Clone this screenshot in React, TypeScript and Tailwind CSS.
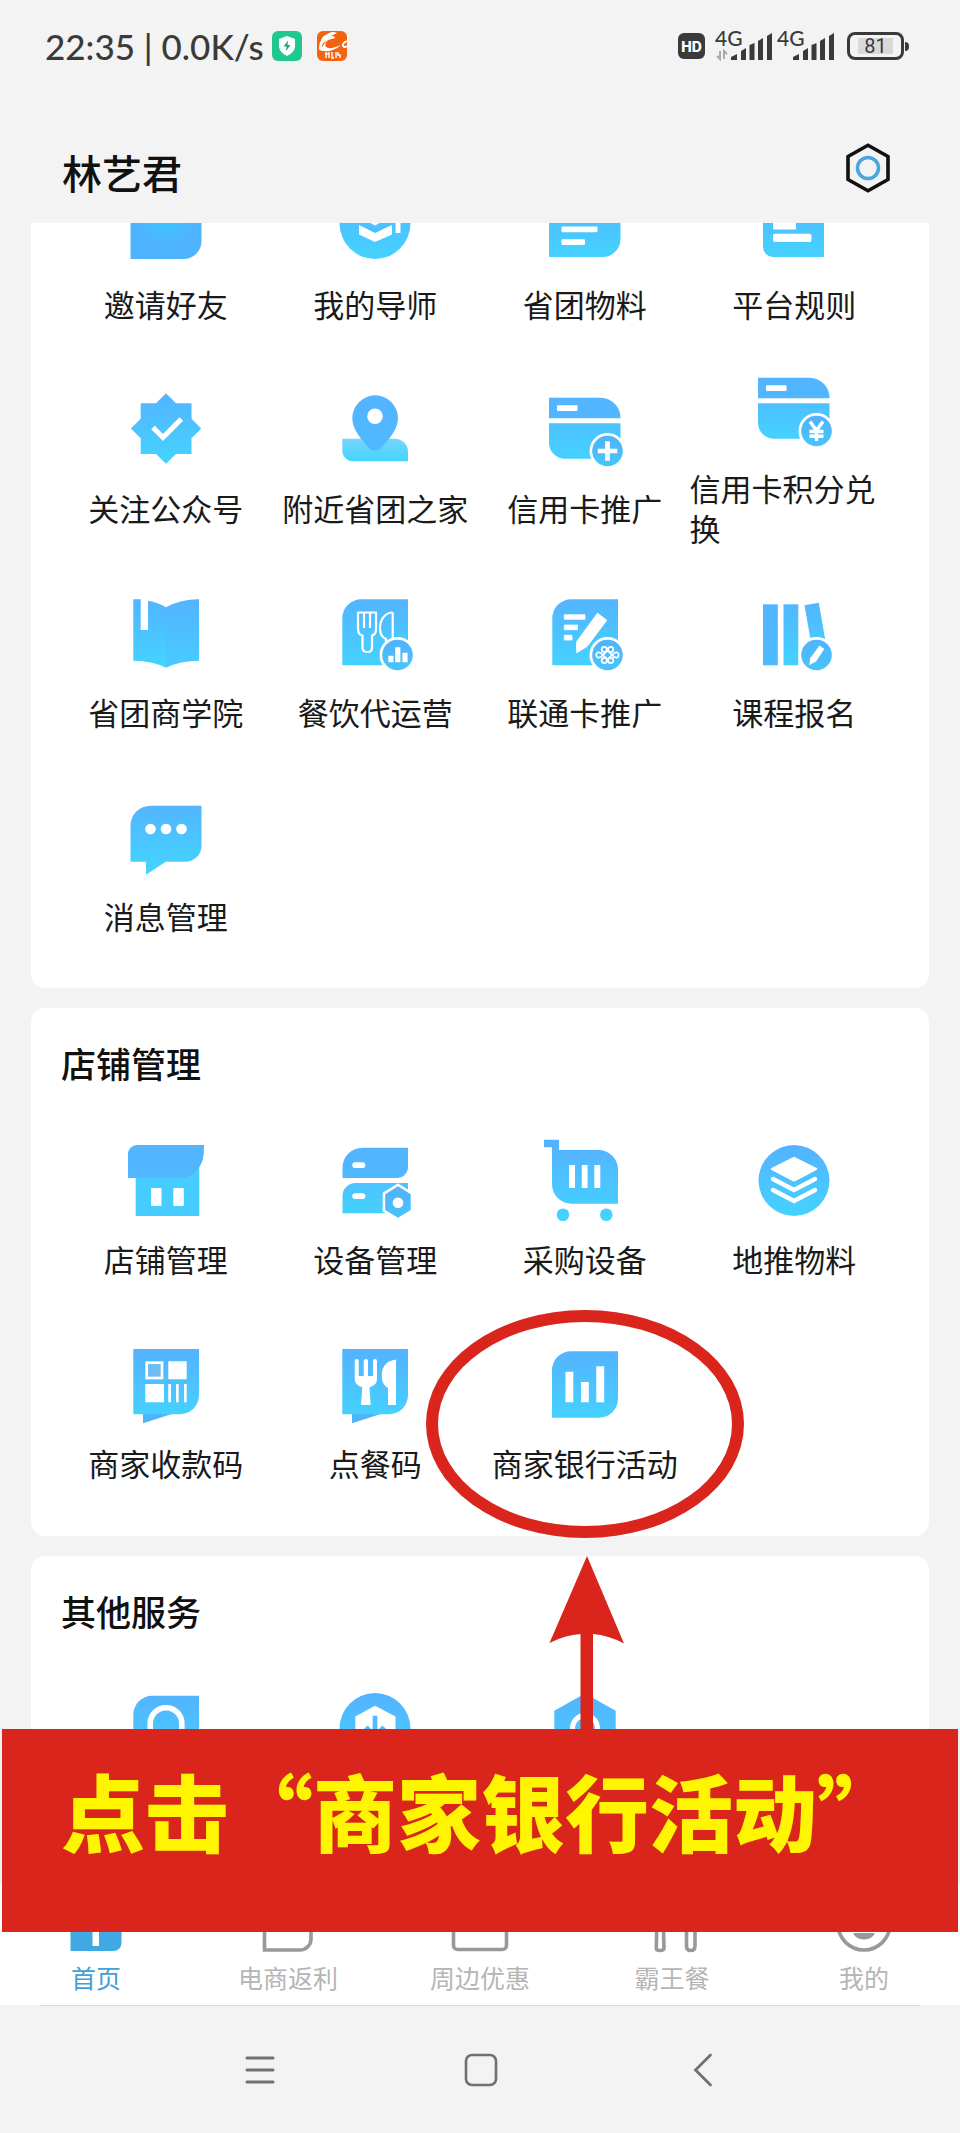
import React from 'react';

type Tile = {
  id: string;
  label?: string;
  icon: React.ReactNode;
  marked?: boolean;
};

// Gradients shared by all the tile icons (80x80 canvas)
const Gradients = () => (
  <svg className="absolute h-0 w-0" aria-hidden="true">
    <defs>
      <linearGradient id="sky" gradientUnits="userSpaceOnUse" x1="0" y1="5" x2="0" y2="75">
        <stop offset="0" stopColor="#54b3ff" />
        <stop offset="1" stopColor="#44d3ff" />
      </linearGradient>
      <linearGradient id="deep" gradientUnits="userSpaceOnUse" x1="0" y1="0" x2="0" y2="90">
        <stop offset="0" stopColor="#54b3ff" />
        <stop offset="1" stopColor="#4cbdff" />
      </linearGradient>
      <linearGradient id="badge" gradientUnits="userSpaceOnUse" x1="0" y1="44" x2="0" y2="80">
        <stop offset="0" stopColor="#52b0fb" />
        <stop offset="1" stopColor="#46c6fb" />
      </linearGradient>
      <linearGradient id="base" gradientUnits="userSpaceOnUse" x1="0" y1="48" x2="0" y2="74">
        <stop offset="0" stopColor="#7fd4fb" />
        <stop offset="1" stopColor="#41d5ff" />
      </linearGradient>
      <radialGradient id="glow" gradientUnits="userSpaceOnUse" cx="40" cy="34" r="26">
        <stop offset="0" stopColor="#38caff" />
        <stop offset="1" stopColor="#4fb4ff" />
      </radialGradient>
    </defs>
  </svg>
);

const Icon = ({ children, viewBox = '0 0 80 80' }: { children: React.ReactNode; viewBox?: string }) => (
  <svg viewBox={viewBox} className="h-20 w-20 shrink-0 overflow-visible" fill="url(#sky)" aria-hidden="true">
    {children}
  </svg>
);

// the shop and service icons sit a little lower on their canvas
const LowIcon = ({ children }: { children: React.ReactNode }) => <Icon viewBox="0 -3 80 80">{children}</Icon>;

const Badge = ({ children }: { children: React.ReactNode }) => (
  <>
    <circle cx="62.5" cy="63" r="18" fill="#fff" />
    <circle cx="62.5" cy="63" r="15.3" fill="url(#badge)" />
    {children}
  </>
);

const CardShape = () => (
  <>
    <path d="M4 9.7H56A20 20 0 0 1 75.5 30.3H4Z" fill="url(#deep)" />
    <path d="M4 35.3H75.5V70.7H20A16 16 0 0 1 4 54.7Z" />
    <rect x="12" y="17.3" width="20.5" height="5.7" rx="1" fill="#fff" />
  </>
);

const promoTiles: Tile[] = [
  {
    id: 'invite',
    label: '邀请好友',
    icon: (
      <Icon>
        <path d="M4.5 10H75.5V57A18 18 0 0 1 57.5 75H4.5Z" fill="url(#glow)" />
      </Icon>
    ),
  },
  {
    id: 'mentor',
    label: '我的导师',
    icon: (
      <Icon>
        <circle cx="40" cy="39.5" r="35.5" />
        <path d="M40 14L66 27.5L40 41.5L14 27.5Z" fill="#fff" />
        <path d="M24 40L40 49L57 40V50.5L40 58L24 50.5Z" fill="#fff" />
        <path d="M24 39.5L40 47L57 39.5" fill="none" stroke="#4cc0ff" strokeWidth="3" />
        <path d="M63 32V49" stroke="#fff" strokeWidth="5" />
      </Icon>
    ),
  },
  {
    id: 'material',
    label: '省团物料',
    icon: (
      <Icon>
        <path d="M4 10H75.5V55A18 18 0 0 1 57.5 73H4Z" />
        <rect x="16.5" y="42.5" width="36" height="5.7" rx="1" fill="#fff" />
        <rect x="16.5" y="55.3" width="23.5" height="5.7" rx="1" fill="#fff" />
      </Icon>
    ),
  },
  {
    id: 'rules',
    label: '平台规则',
    icon: (
      <Icon>
        <path d="M9 10H70V73H19A10 10 0 0 1 9 63Z" />
        <rect x="19" y="30" width="23" height="15.5" rx="1" fill="#fff" />
        <rect x="19" y="49.7" width="38.5" height="8.4" rx="2" fill="#fff" />
      </Icon>
    ),
  },
  {
    id: 'follow',
    label: '关注公众号',
    icon: (
      <Icon>
        <path d="M40 5.3L50 15.2H65.5V30.7L75.2 40.5L65.5 50.3V66H50L40 75.7L30 66H14.7V50.3L4.8 40.5L14.7 30.7V15.2H30Z" />
        <path d="M27 39.5L37 49.5L55.3 31" fill="none" stroke="#fff" strokeWidth="5" />
      </Icon>
    ),
  },
  {
    id: 'nearby',
    label: '附近省团之家',
    icon: (
      <Icon>
        <path d="M7.3 50.7H60A13 13 0 0 1 73 63.7V73.3H18A10.7 10.7 0 0 1 7.3 62.6Z" fill="url(#base)" />
        <path d="M40 7.3A23 23 0 0 0 17.3 30.3C17.3 42 27 52 34 60Q40 66 46 60C53 52 63 42 63 30.3A23 23 0 0 0 40 7.3Z" fill="url(#deep)" />
        <circle cx="40" cy="28.2" r="7.8" fill="#fff" />
      </Icon>
    ),
  },
  {
    id: 'credit',
    label: '信用卡推广',
    icon: (
      <Icon>
        <CardShape />
        <Badge>
          <path d="M62.5 53.3V72.7M52.8 63H72.2" stroke="#fff" strokeWidth="4.7" />
        </Badge>
      </Icon>
    ),
  },
  {
    id: 'points',
    label: '信用卡积分兑换',
    icon: (
      <Icon>
        <CardShape />
        <Badge>
          <path d="M56 53.5L62.5 62.5L69 53.5M62.5 62V73M55.5 63.5H69.5M55.5 68.3H69.5" fill="none" stroke="#fff" strokeWidth="3.4" />
        </Badge>
      </Icon>
    ),
  },
  {
    id: 'school',
    label: '省团商学院',
    icon: (
      <Icon>
        <path d="M7.3 7.3H14.7V38H22V8.8Q32 10.5 40 15.3Q55 7.3 73 7.3V68.7Q54 68.7 40 75.7Q26 68.7 7.3 68.7Z" />
        <path d="M40 15.3Q55 7.3 73 7.3V68.7Q54 68.7 40 75.7Z" fill="#54b3ff" opacity="0.25" />
      </Icon>
    ),
  },
  {
    id: 'catering',
    label: '餐饮代运营',
    icon: (
      <Icon>
        <path d="M7.3 26.3A19 19 0 0 1 26.3 7.3H73V73.3H7.3Z" />
        <g fill="none" stroke="#fff" strokeWidth="2.2" strokeLinejoin="round">
          <path d="M23 20.5H41V37Q41 42.5 37 43.5V56Q37 60 32.3 60Q27.5 60 27.5 56V43.5Q23 42.5 23 37Z" />
          <path d="M29 20.5V36M35 20.5V36" />
          <path d="M57.7 20.5V48M57.7 20.5C49 20.5 45 29 45 36.5C45 42.5 47.5 45.5 51 47V52" />
        </g>
        <Badge>
          <path d="M53.3 63.7H58.5V70.3H53.3ZM60.2 55.3H65.4V70.3H60.2ZM67.4 60.7H72.6V70.3H67.4Z" fill="#fff" />
        </Badge>
      </Icon>
    ),
  },
  {
    id: 'unicom',
    label: '联通卡推广',
    icon: (
      <Icon>
        <path d="M7.3 26.3A19 19 0 0 1 26.3 7.3H73V73.3H7.3Z" />
        <path d="M19.3 22.7H40V27.3H19.3ZM19.3 33H32.5V37.7H19.3ZM19.3 43.3H27V48H19.3Z" fill="#fff" stroke="#fff" strokeWidth="0.8" strokeLinejoin="round" />
        <path d="M52.5 21.3L61.7 28.3L42 54.5L31.7 60.7V49.7Z" fill="#fff" stroke="#fff" strokeLinejoin="round" />
        <Badge>
          <g fill="none" stroke="#fff" strokeWidth="1.7">
            <path d="M62.5 58.5L67 63L62.5 67.5L58 63Z" />
            <path d="M58 63Q55 59.5 52.5 60.5Q50 63 52.5 65.5Q55 66.5 58 63M67 63Q70 59.5 72.5 60.5Q75 63 72.5 65.5Q70 66.5 67 63" />
            <circle cx="59.3" cy="57.5" r="2.6" />
            <circle cx="65.7" cy="57.5" r="2.6" />
            <circle cx="59.3" cy="68.5" r="2.6" />
            <circle cx="65.7" cy="68.5" r="2.6" />
          </g>
        </Badge>
      </Icon>
    ),
  },
  {
    id: 'course',
    label: '课程报名',
    icon: (
      <Icon>
        <path d="M9 12.3H23.8V73.3H9Z" fill="url(#deep)" />
        <path d="M29.5 12.3H44.3V73.3H29.5Z" />
        <path d="M50.5 13.2L64.8 10.8L71 46.5L71 56H58Z" />
        <Badge>
          <path d="M65.5 53.5L70.3 57L62 69.5L55.5 73L56 66.5Z" fill="#fff" />
        </Badge>
      </Icon>
    ),
  },
  {
    id: 'message',
    label: '消息管理',
    icon: (
      <Icon>
        <path d="M4.5 29.7A20 20 0 0 1 24.5 9.7H75.5V49.7A16 16 0 0 1 59.5 65.7H39.7L20 78.7V65.7H4.5Z" />
        <circle cx="24.5" cy="33" r="5.3" fill="#fff" />
        <circle cx="40" cy="33" r="5.3" fill="#fff" />
        <circle cx="55.5" cy="33" r="5.3" fill="#fff" />
      </Icon>
    ),
  },
];

const shopTiles: Tile[] = [
  {
    id: 'shop',
    label: '店铺管理',
    icon: (
      <LowIcon>
        <path d="M9.7 20H73.3V74H9.7Z" fill="#46ccff" />
        <path d="M2 12A9 9 0 0 1 11 3H78C78 10 77.5 16 76 20C72 29 65 36 54 36H2Z" fill="url(#deep)" />
        <rect x="25" y="46" width="10.5" height="18" rx="1" fill="#fff" />
        <rect x="47.3" y="46" width="10.5" height="18" rx="1" fill="#fff" />
      </LowIcon>
    ),
  },
  {
    id: 'device',
    label: '设备管理',
    icon: (
      <LowIcon>
        <path d="M7.5 25.7A20 20 0 0 1 27.5 5.7H73V25A11 11 0 0 1 62 36H7.5Z" fill="url(#deep)" />
        <path d="M7.5 54A13 13 0 0 1 20.5 41H73V71.3H7.5Z" />
        <rect x="17.3" y="20.3" width="13" height="5.7" rx="2.8" fill="#fff" />
        <rect x="17.3" y="51.3" width="13" height="5.7" rx="2.8" fill="#fff" />
        <path d="M63 44.3L75.7 52.2V68L63 75.7L50.2 68V52.2Z" fill="url(#badge)" stroke="#fff" strokeWidth="5" paintOrder="stroke" />
        <circle cx="63" cy="60.8" r="5.3" fill="#fff" />
      </LowIcon>
    ),
  },
  {
    id: 'purchase',
    label: '采购设备',
    icon: (
      <LowIcon>
        <path d="M-1 -2.3H14V8H53.5A19.5 19.5 0 0 1 73 27.5V61.7H26.5A19.5 19.5 0 0 1 7 42.2V5.3H-1Z" />
        <circle cx="18" cy="72.7" r="6.3" />
        <circle cx="61.3" cy="72.7" r="6.3" />
        <path d="M24 23H30V46H24ZM36.8 23H42.6V46H36.8ZM49.3 23H55.3V46H49.3Z" fill="#fff" />
      </LowIcon>
    ),
  },
  {
    id: 'promo-goods',
    label: '地推物料',
    icon: (
      <LowIcon>
        <circle cx="40" cy="38.5" r="35.5" />
        <path d="M40 16L62 27L40 38.3L18 27Z" fill="#fff" stroke="#fff" strokeWidth="2.5" strokeLinejoin="round" />
        <path d="M19 37L40 48L61 37M19 48L40 59L61 48" fill="none" stroke="#fff" strokeWidth="4.5" strokeLinecap="round" />
      </LowIcon>
    ),
  },
  {
    id: 'qr',
    label: '商家收款码',
    icon: (
      <LowIcon>
        <path d="M17 66H52L17 77.3Z" fill="#4fb2fb" />
        <path d="M7.3 3H73V49.3A19 19 0 0 1 54 68.3H7.3Z" />
        <rect x="20.7" y="16.7" width="15.3" height="15.3" fill="#6fbcf0" stroke="#fff" strokeWidth="2.7" />
        <path d="M42.3 15.3H60.7V33.3H42.3ZM19.3 38H38V56.3H19.3ZM42.3 38H45V56.3H42.3ZM50 38H52.7V56.3H50ZM58 38H60.7V56.3H58Z" fill="#fff" />
      </LowIcon>
    ),
  },
  {
    id: 'order',
    label: '点餐码',
    icon: (
      <LowIcon>
        <path d="M17 66H52L17 77.3Z" fill="#4fb2fb" />
        <path d="M7.3 3H73V49.3A19 19 0 0 1 54 68.3H7.3Z" />
        <path d="M19.7 15Q19.7 13 21.7 13Q23.7 13 23.7 15V30H28.7V15Q28.7 13 30.9 13Q33 13 33 15V30H38V15Q38 13 40 13Q42 13 42 15V33Q42 39.5 34.5 41.3L35.7 59H26L27.3 41.3Q19.7 39.5 19.7 33Z" fill="#fff" />
        <path d="M61 13.5V59H53V42Q46.7 39 46.7 29Q47 15.5 61 13.5Z" fill="#fff" />
      </LowIcon>
    ),
  },
  {
    id: 'bank',
    label: '商家银行活动',
    marked: true,
    icon: (
      <LowIcon>
        <path d="M7 24.3A19 19 0 0 1 26 5.3H73V52.7A19 19 0 0 1 54 71.7H7Z" />
        <path d="M20.5 25.7H28.3V56.3H20.5ZM36 36H43.8V56.3H36ZM51.3 20.3H59.2V56.3H51.3Z" fill="#fff" />
      </LowIcon>
    ),
  },
];

const otherTiles: Tile[] = [
  {
    id: 'service',
    icon: (
      <LowIcon>
        <path d="M7.3 24.7A19 19 0 0 1 26.3 5.7H73V72H7.3Z" />
        <path d="M24.2 50V33.5A15.8 15.8 0 0 1 55.8 33.5V50" fill="none" stroke="#fff" strokeWidth="5.6" />
      </LowIcon>
    ),
  },
  {
    id: 'download',
    icon: (
      <LowIcon>
        <circle cx="40" cy="38.5" r="35.5" />
        <path d="M40 15.7L60.5 26.5V52L40 62L20.3 52V26.5Z" fill="#fff" />
        <path d="M40 25.7V50M31 37L40 47L49 37" fill="none" stroke="#4ebcff" strokeWidth="4.7" />
      </LowIcon>
    ),
  },
  {
    id: 'settings',
    icon: (
      <LowIcon>
        <path d="M40 3.5L70.7 20.7V56L40 73.5L9.3 56V20.7Z" />
        <circle cx="40" cy="38" r="12.5" fill="none" stroke="#fff" strokeWidth="5" />
      </LowIcon>
    ),
  },
];

const TileGrid = ({ tiles }: { tiles: Tile[] }) => (
  <div className="grid grid-cols-4">
    {tiles.map((tile) => (
      <a key={tile.id} href={`#${tile.id}`} className="relative flex h-[204px] flex-col items-center justify-center gap-5">
        {tile.icon}
        <span className="min-h-10 text-[31px] leading-10 text-[#1a1a1a]">{tile.label}</span>
        {tile.marked && (
          <span className="absolute -inset-x-[54px] -top-px -bottom-[23px] rounded-[50%] border-[12px] border-[#da251c]" />
        )}
      </a>
    ))}
  </div>
);

const Section = ({ title, tiles }: { title: string; tiles: Tile[] }) => (
  <section className="rounded-[14px] bg-white px-[30px] pt-[30px] pb-[21px]">
    <h2 className="mb-[19px] text-[35px] leading-[50px] font-medium text-[#111]">{title}</h2>
    <TileGrid tiles={tiles} />
  </section>
);

const Signal = ({ data }: { data?: boolean }) => (
  <span className="relative h-8 w-[58px]">
    <span className="absolute -top-1 left-0 text-[21px] leading-6 font-medium">4G</span>
    <svg viewBox="0 0 58 32" className="h-8 w-[58px]" fill="#3a3a3a" aria-hidden="true">
      <path d="M16 30V27L22 24V30ZM26 30V21L31 18V30ZM34.5 30V15L39.5 13V30ZM43 30V11L48 8V30ZM52 30V6L57 3V30Z" />
      {data && <path d="M5 21V29L2 26M9 29V21L12 24" fill="none" stroke="#aaa" strokeWidth="2" />}
    </svg>
  </span>
);

const StatusBar = () => (
  <div className="flex h-[92px] items-center pr-[56px] pl-[45px] font-[Lato,'Noto_Sans_CJK_SC',sans-serif] text-[#3a3a3a]">
    <span className="text-[35px] leading-10 font-medium">22:35 | 0.0K/s</span>
    <svg viewBox="0 0 30 30" className="ml-2 h-[30px] w-[30px]" aria-hidden="true">
      <rect width="30" height="30" rx="6" fill="#1fc88f" />
      <path d="M15 5L23 8V16Q22 22 15 25Q8 22 7 16V8Z" fill="#fff" />
      <path d="M16 9.5L11.5 15.5H14.5L14 20L18.5 14H15.5Z" fill="#1fa87c" />
    </svg>
    <svg viewBox="0 0 30 30" className="ml-[15px] h-[30px] w-[30px]" aria-hidden="true">
      <rect width="30" height="30" rx="6" fill="#f2640f" />
      <path d="M2 18Q2 6 12 2Q16 0 20 2L14 5Q18 5 18 7L11 9Q7 13 9 16Q13 19 24 14Q16 21 8 20Q3 20 2 18Z" fill="#fff" />
      <path d="M10 10Q5 14 6 17Q3 12 10 10Z" fill="#f2640f" />
      <path d="M30 10Q25 12 26 15Q28 17 30 15" fill="none" stroke="#fff" strokeWidth="1.8" />
      <path d="M9 21V27M8 23H12M12 21V27M15 21V27H17M19 21V27M21 21V24H23V27" fill="none" stroke="#fff" strokeWidth="1.4" />
    </svg>
    <span className="ml-auto flex h-[26px] w-[27px] items-center justify-center rounded-md bg-[#3a3a3a] font-[Inter,sans-serif] text-[14px] font-extrabold text-white">
      HD
    </span>
    <span className="ml-[10px] flex gap-1">
      <Signal data />
      <Signal />
    </span>
    <span className="relative ml-3 flex h-7 w-[57px] items-center justify-center rounded-lg border-[3px] border-[#3a3a3a] p-1 font-[Roboto,sans-serif] text-[20px]">
      <span className="flex h-4 w-[35px] items-center justify-center bg-[#d9d9d9] leading-4">81</span>
      <span className="absolute -right-2 h-[9px] w-1 rounded-r bg-[#3a3a3a]" />
    </span>
  </div>
);

const tabs = [
  {
    label: '首页',
    active: true,
    icon: (
      <>
        <path d="M4.5 10H55.5V48A8 8 0 0 1 47.5 56H4.5Z" fill="#41a9e2" />
        <path d="M26.5 28H33V51H26.5Z" fill="#fff" />
      </>
    ),
  },
  {
    label: '电商返利',
    icon: <path d="M6.5 12H53V44A11 11 0 0 1 42 55H6.5Z" />,
  },
  {
    label: '周边优惠',
    icon: (
      <>
        <rect x="3.5" y="12" width="53" height="42.5" rx="4" />
        <path d="M36 30Q42 40 49 30" />
      </>
    ),
  },
  {
    label: '霸王餐',
    icon: (
      <>
        <path d="M15 20L14.3 53Q14.3 55.5 18 55.5Q22 55.5 22 53L21 20" />
        <path d="M44.5 20V51Q44.5 55.5 48.7 55.5Q53 55.5 53 51V20" />
      </>
    ),
  },
  {
    label: '我的',
    icon: (
      <>
        <circle cx="30" cy="29" r="26" />
        <path d="M19 38H41Q38 44.5 30 44.5Q22 44.5 19 38Z" fill="#999" stroke="none" />
      </>
    ),
  },
];

const App = () => {
  return (
    <div className="relative flex h-screen flex-col overflow-hidden bg-[#f3f3f3] font-['Noto_Sans_CJK_SC',sans-serif]" lang="zh-CN">
      <Gradients />
      <StatusBar />

      <header className="flex items-start justify-between pt-10 pr-[70px] pb-[11px] pl-[62px]">
        <h1 className="text-[40px] leading-[80px] font-medium text-[#111]">林艺君</h1>
        <button type="button" aria-label="设置" className="flex h-[72px] items-center">
          <svg viewBox="0 0 44 50" className="h-[50px] w-11" fill="none">
            <path d="M22 2.3L42 13.5V36.5L22 47.7L2 36.5V13.5Z" stroke="#111" strokeWidth="3.6" />
            <circle cx="22" cy="25" r="10.5" stroke="#4aa6dc" strokeWidth="3.6" />
          </svg>
        </button>
      </header>

      <main className="min-h-0 flex-1 overflow-hidden px-[31px]">
        <div className="flex flex-col gap-5">
          {/* scrolled part way down, so the first row is cut */}
          <section className="-mt-[71px] rounded-[14px] bg-white px-[30px] pb-5">
            <TileGrid tiles={promoTiles} />
          </section>
          <Section title="店铺管理" tiles={shopTiles} />
          <Section title="其他服务" tiles={otherTiles} />
        </div>
      </main>

      <nav className="flex bg-white pt-[10px] pb-[10px]">
        {tabs.map((tab) => (
          <a
            key={tab.label}
            href="#"
            className={`flex flex-1 flex-col items-center gap-1 ${tab.active ? 'text-[#41a0d4]' : 'text-[#b5b5b5]'}`}
          >
            <svg viewBox="0 0 60 60" className="h-[60px] w-[60px]" fill="none" stroke={tab.active ? 'none' : '#999'} strokeWidth="3.6" aria-hidden="true">
              {tab.icon}
            </svg>
            <span className="text-[25px] leading-9">{tab.label}</span>
          </a>
        ))}
      </nav>

      <div className="mx-10 h-px bg-[#d9d9d9]" />
      <div className="flex h-[127px] items-center justify-between pr-[247px] pl-[244px]">
        <button type="button" aria-label="菜单">
          <svg viewBox="0 0 32 32" className="h-8 w-8" stroke="#707070" strokeWidth="3" strokeLinecap="round">
            <path d="M3 4H29M3 16H29M3 28H29" />
          </svg>
        </button>
        <button type="button" aria-label="主屏幕">
          <svg viewBox="0 0 34 34" className="h-[34px] w-[34px]" fill="none" stroke="#707070" strokeWidth="2.6">
            <rect x="2" y="2" width="30" height="30" rx="6" />
          </svg>
        </button>
        <button type="button" aria-label="返回" className="pl-2">
          <svg viewBox="0 0 20 34" className="h-[34px] w-5" fill="none" stroke="#707070" strokeWidth="2.8" strokeLinecap="round">
            <path d="M17.5 2L2.5 17L17.5 32" />
          </svg>
        </button>
      </div>

      {/* step hint laid over the page */}
      <div className="absolute inset-x-[2px] bottom-[201px] bg-[#da251c] pt-[31px] pb-[72px] pl-[59px]">
        <svg viewBox="0 0 76 173" className="absolute bottom-full left-[547px] h-[173px] w-[76px]" fill="#da251c" aria-hidden="true">
          <path d="M38 0L75 87.5Q59 79 44 78V173H31.5V78Q16 79 0.5 87Z" />
        </svg>
        <p className="text-[84px] leading-[100px] font-black whitespace-nowrap text-[#fff500]">点击“商家银行活动”</p>
      </div>
    </div>
  );
};

export default App;
